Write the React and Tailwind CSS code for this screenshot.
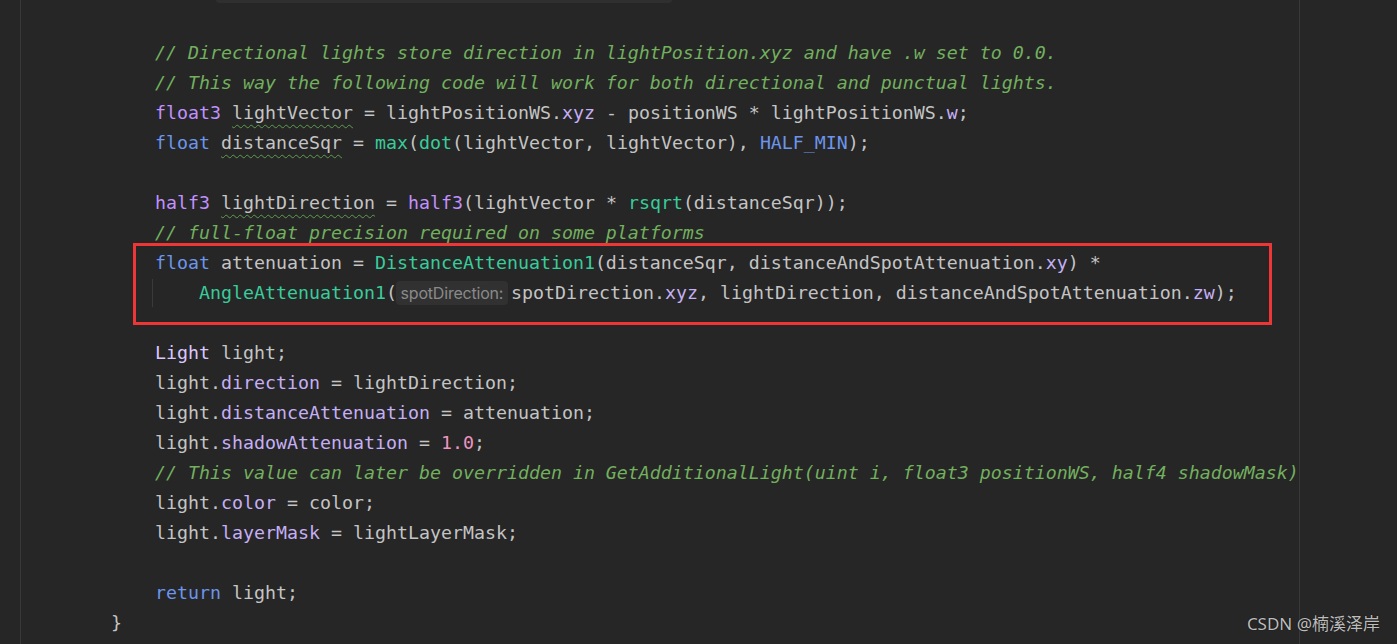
import React from 'react';

// token colours (Rider dark-ish)
const cm = 'text-[#72b05e] italic';
const kw = 'text-[#6c95eb]';
const ty = 'text-[#c191ff]';
const st = 'text-[#dcc6ff]';
const fn = 'text-[#39cc9b]';
const fld = 'text-[#c5aff5]';
const num = 'text-[#ed94c0]';
const wavy = 'underline decoration-wavy decoration-[#5e9c50] decoration-1 underline-offset-[5px]';

const T = ({ c, children }) => <span className={c}>{children}</span>;

const Row = ({ children, indent = 4, className = '' }) => (
  <div className={`relative h-[30px] leading-[30px] whitespace-pre ${className}`}>
    {' '.repeat(indent)}
    {children}
  </div>
);

const InlayHint = ({ text }) => (
  <span className="inline-flex w-[112px] h-[24px] mr-[3px] -ml-[1px] items-center justify-center align-middle -mt-[3px] rounded-[4px] bg-[#313131] text-[#8a8a8a] text-[16px] tracking-[-0.2px] font-['Inter',sans-serif] not-italic">
    {text}
  </span>
);

export default function App() {
  return (
    <div className="relative w-full h-[644px] bg-[#262626] overflow-hidden flex">
      <div className="relative ml-[20px] w-[1280px] h-full border-x border-[#383838] text-[#c4c4c4] text-[18.27px] font-['DejaVu_Sans_Mono',monospace]">
        {/* breadcrumb strip at the top */}
        <div className="ml-[195px] w-[456px] h-[3px] bg-[#2f2f2f] rounded-b-[4px]" />

        <div className="pt-[35px] pl-[90px]">
          <Row><T c={cm}>// Directional lights store direction in lightPosition.xyz and have .w set to 0.0.</T></Row>
          <Row><T c={cm}>// This way the following code will work for both directional and punctual lights.</T></Row>
          <Row>
            <T c={ty}>float3</T> <T c={wavy}>lightVector</T> = lightPositionWS.<T c={fld}>xyz</T> - positionWS * lightPositionWS.<T c={fld}>w</T>;
          </Row>
          <Row>
            <T c={kw}>float</T> <T c={wavy}>distanceSqr</T> = <T c={fn}>max</T>(<T c={fn}>dot</T>(lightVector, lightVector), <T c={kw}>HALF_MIN</T>);
          </Row>
          <Row indent={0} />
          <Row>
            <T c={ty}>half3</T> <T c={wavy}>lightDirection</T> = <T c={ty}>half3</T>(lightVector * <T c={fn}>rsqrt</T>(distanceSqr));
          </Row>
          <Row><T c={cm}>// full-float precision required on some platforms</T></Row>
          <Row>
            <T c={kw}>float</T> attenuation = <T c={fn}>DistanceAttenuation1</T>(distanceSqr, distanceAndSpotAttenuation.<T c={fld}>xy</T>) *
          </Row>
          <Row indent={8}>
            <span className="absolute left-[41px] top-[1px] h-[28px] w-px bg-[#3a3a3a]" />
            <T c={fn}>AngleAttenuation1</T>(<InlayHint text="spotDirection:" />spotDirection.<T c={fld}>xyz</T>, lightDirection, distanceAndSpotAttenuation.<T c={fld}>zw</T>);
          </Row>
          <Row indent={0} />
          <Row><T c={st}>Light</T> light;</Row>
          <Row>light.<T c={fld}>direction</T> = lightDirection;</Row>
          <Row>light.<T c={fld}>distanceAttenuation</T> = attenuation;</Row>
          <Row>light.<T c={fld}>shadowAttenuation</T> = <T c={num}>1.0</T>;</Row>
          <Row><T c={cm}>// This value can later be overridden in GetAdditionalLight(uint i, float3 positionWS, half4 shadowMask)</T></Row>
          <Row>light.<T c={fld}>color</T> = color;</Row>
          <Row>light.<T c={fld}>layerMask</T> = lightLayerMask;</Row>
          <Row indent={0} />
          <Row><T c={kw}>return</T> light;</Row>
          <Row indent={0}>{'}'}</Row>
        </div>

        {/* annotation box */}
        <div className="absolute left-[112px] top-[243px] w-[1139px] h-[82px] border-[3px] border-[#ef3636] pointer-events-none" />
      </div>

      <div className="absolute right-[17px] bottom-[8px] text-[17px] text-[#bdbdbd] font-['Noto_Sans','Noto_Sans_CJK_SC',sans-serif] [text-shadow:0_0_1px_#000]">
        CSDN @楠溪泽岸
      </div>
    </div>
  );
}
